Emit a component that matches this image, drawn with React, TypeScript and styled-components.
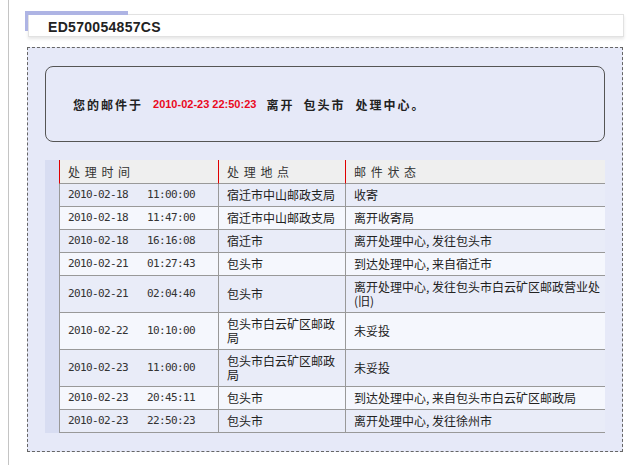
import React from "react";
import styled, { createGlobalStyle } from "styled-components";

const Global = createGlobalStyle`
  html, body { margin: 0; padding: 0; background: #fff; }
  body { font-family: "Noto Sans CJK SC", "Liberation Sans", sans-serif; }
  * { box-sizing: border-box; }
`;

const Frame = styled.div`
  margin-left: 8px;
  border-left: 1px solid #c4c4c4;
  min-height: 100vh;
  padding: 11px 7px 0 16px;
`;

const TitleWrap = styled.div`
  position: relative;
  padding: 3px 0 0 3px;
  &::before {
    content: "";
    position: absolute;
    left: 0;
    top: 0;
    width: 103px;
    height: 4px;
    background: #aeb4e4;
    z-index: 1;
  }
  &::after {
    content: "";
    position: absolute;
    left: 0;
    top: 0;
    width: 3px;
    height: 20px;
    background: #aeb4e4;
  }
`;

const TitleBox = styled.div`
  height: 23px;
  background: #fff;
  border: 1px solid #e2e2e2;
  box-shadow: 0 2px 3px rgba(0, 0, 0, 0.1);
  padding: 3px 0 0 19px;
  font-family: "Liberation Sans", Arial, sans-serif;
  font-weight: bold;
  font-size: 14px;
  line-height: 18px;
  letter-spacing: 0.3px;
  color: #222;
`;

const DashedBox = styled.div`
  margin: 10px 1px 0 2px;
  border: 1px dashed #666;
  background: #e6e9f8;
  padding: 18px 17px 18px 17px;
`;

const Notice = styled.div`
  height: 76px;
  border: 1px solid #555;
  border-radius: 8px;
  display: flex;
  align-items: center;
  padding-left: 27px;
  font-family: "Noto Sans CJK SC", sans-serif;
  font-weight: bold;
  font-size: 12px;
  letter-spacing: 2px;
  color: #222;
  white-space: nowrap;
`;

const Seg = styled.span<{ $gap?: number }>`
  margin-left: ${(p) => p.$gap ?? 0}px;
`;

const RedTime = styled.span`
  margin-left: 10px;
  font-family: "Liberation Sans", Arial, sans-serif;
  font-size: 11px;
  letter-spacing: 0;
  color: #ea0a1e;
`;

const TableWrap = styled.div`
  margin-top: 18px;
  border-left: 14px solid #d8ddf2;
`;

const Table = styled.table`
  width: 100%;
  border-collapse: separate;
  border-spacing: 0;
  table-layout: fixed;
  font-family: "Noto Sans CJK SC", sans-serif;
  font-size: 12px;
  color: #222;
`;

const Th = styled.th`
  height: 24px;
  background: #efefef;
  border-left: 1px solid #e00000;
  border-bottom: 1px solid #999;
  padding: 0 0 0 8px;
  line-height: 15px;
  font-weight: normal;
  text-align: left;
  letter-spacing: 1px;
  color: #333;
`;

const Tr = styled.tr<{ $alt: boolean }>`
  background: ${(p) => (p.$alt ? "#f5f7fd" : "#e9ecf8")};
`;

const Td = styled.td`
  border-left: 1px solid #999;
  border-bottom: 1px solid #999;
  padding: 4px 2px 4px 8px;
  line-height: 14px;
  vertical-align: middle;
`;

const Mono = styled.span`
  font-family: "DejaVu Sans Mono", "Liberation Mono", monospace;
  font-size: 11px;
  line-height: 14px;
  vertical-align: top;
  letter-spacing: -0.62px;
  color: #333;
`;

const DateSpan = styled(Mono)`
  display: inline-block;
  width: 79px;
`;

const rows: [string, string, string, string][] = [
  ["2010-02-18", "11:00:00", "宿迁市中山邮政支局", "收寄"],
  ["2010-02-18", "11:47:00", "宿迁市中山邮政支局", "离开收寄局"],
  ["2010-02-18", "16:16:08", "宿迁市", "离开处理中心, 发往包头市"],
  ["2010-02-21", "01:27:43", "包头市", "到达处理中心, 来自宿迁市"],
  ["2010-02-21", "02:04:40", "包头市", "离开处理中心, 发往包头市白云矿区邮政营业处(旧)"],
  ["2010-02-22", "10:10:00", "包头市白云矿区邮政局", "未妥投"],
  ["2010-02-23", "11:00:00", "包头市白云矿区邮政局", "未妥投"],
  ["2010-02-23", "20:45:11", "包头市", "到达处理中心, 来自包头市白云矿区邮政局"],
  ["2010-02-23", "22:50:23", "包头市", "离开处理中心, 发往徐州市"],
];

export default function App() {
  return (
    <>
      <Global />
      <Frame>
        <TitleWrap>
          <TitleBox>ED570054857CS</TitleBox>
        </TitleWrap>
        <DashedBox>
          <Notice>
            <Seg>您的邮件于</Seg>
            <RedTime>2010-02-23 22:50:23</RedTime>
            <Seg $gap={10}>离开</Seg>
            <Seg $gap={9}>包头市</Seg>
            <Seg $gap={10}>处理中心。</Seg>
          </Notice>
          <TableWrap>
            <Table>
              <colgroup>
                <col style={{ width: 159 }} />
                <col style={{ width: 127 }} />
                <col />
              </colgroup>
              <thead>
                <tr>
                  <Th>处 理 时 间</Th>
                  <Th>处 理 地 点</Th>
                  <Th>邮 件 状 态</Th>
                </tr>
              </thead>
              <tbody>
                {rows.map((r, i) => (
                  <Tr key={i} $alt={i % 2 === 1}>
                    <Td>
                      <DateSpan>{r[0]}</DateSpan>
                      <Mono>{r[1]}</Mono>
                    </Td>
                    <Td>{r[2]}</Td>
                    <Td>{r[3]}</Td>
                  </Tr>
                ))}
              </tbody>
            </Table>
          </TableWrap>
        </DashedBox>
      </Frame>
    </>
  );
}
